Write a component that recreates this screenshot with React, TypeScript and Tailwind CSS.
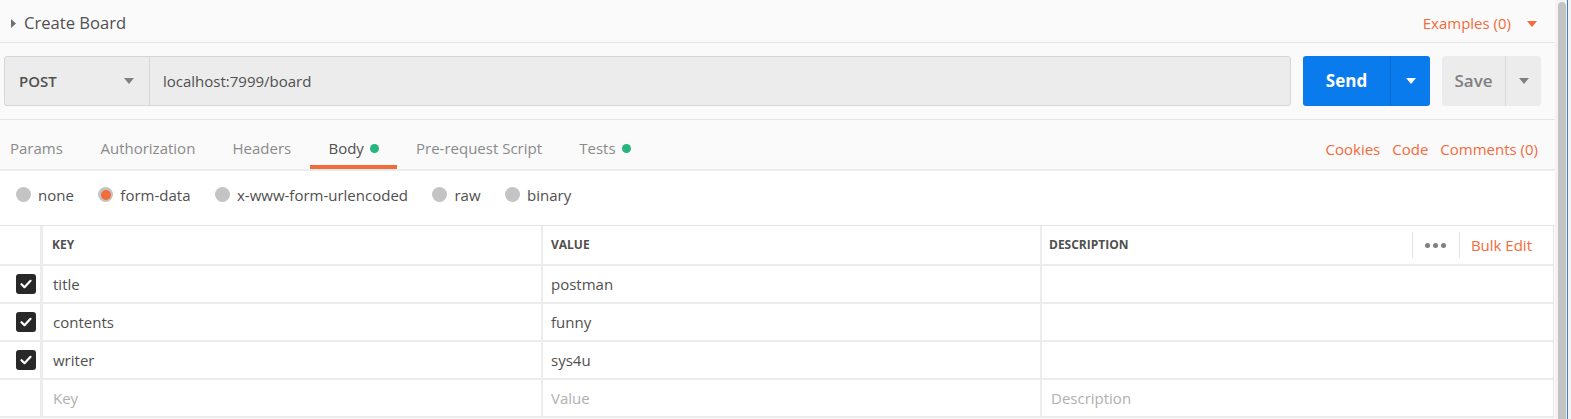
import React from 'react';

const rows = [
  { key: 'title', value: 'postman' },
  { key: 'contents', value: 'funny' },
  { key: 'writer', value: 'sys4u' },
];

const tabs = [
  { label: 'Params' },
  { label: 'Authorization' },
  { label: 'Headers' },
  { label: 'Body', dot: true, active: true },
  { label: 'Pre-request Script' },
  { label: 'Tests', dot: true },
];

const bodyModes = ['none', 'form-data', 'x-www-form-urlencoded', 'raw', 'binary'];

function Caret({ className }: { className: string }) {
  return (
    <svg width="10" height="6" viewBox="0 0 10 6" className={className}>
      <path d="M0 0h10L5 6z" fill="currentColor" />
    </svg>
  );
}

function Checkbox() {
  return (
    <span className="flex h-[20px] w-[20px] items-center justify-center rounded-[3px] bg-[#282828]">
      <svg width="12" height="10" viewBox="0 0 12 10">
        <path d="M1.5 5.2l3 3 6-6.4" fill="none" stroke="#fff" strokeWidth="2.2" strokeLinecap="round" strokeLinejoin="round" />
      </svg>
    </span>
  );
}

export default function App() {
  return (
    <div className="flex h-[419px] w-[1571px] overflow-hidden bg-[#fafafa] font-['Open_Sans',sans-serif] text-[15px] text-[#505050]">
      <div className="flex w-[1555px] flex-col">
        {/* Request name */}
        <div className="flex h-[43px] items-center justify-between border-b border-[#e6e6e6] pt-[5px] pr-[18px] pl-[11px]">
          <div className="flex items-center gap-[8px]">
            <svg width="5" height="9" viewBox="0 0 5 9">
              <path d="M0 0l5 4.5L0 9z" fill="#707070" />
            </svg>
            <span className="text-[16.6px] text-[#505050]">Create Board</span>
          </div>
          <div className="flex items-center gap-[16px] text-[#f26b3a]">
            <span>Examples (0)</span>
            <Caret className="text-[#f26b3a]" />
          </div>
        </div>

        {/* URL bar */}
        <div className="flex h-[77px] items-center gap-[12px] border-b border-[#e6e6e6] pr-[14px] pl-[4px]">
          <div className="flex h-[50px] flex-1 overflow-hidden rounded-[3px] border border-[#d6d6d6] bg-[#ececec]">
            <div className="flex w-[145px] items-center justify-between border-r border-[#d6d6d6] pr-[15px] pl-[14px]">
              <span className="font-semibold text-[#505050]">POST</span>
              <Caret className="text-[#808080]" />
            </div>
            <div className="flex flex-1 items-center pl-[13px] text-[#505050]">localhost:7999/board</div>
          </div>
          <div className="flex h-[50px] w-[127px] overflow-hidden rounded-[3px] bg-[#097bed] text-white">
            <div className="flex w-[88px] items-center justify-center border-r border-[#0a6cd0] text-[17px] font-bold">Send</div>
            <div className="flex flex-1 items-center justify-center">
              <Caret className="text-white" />
            </div>
          </div>
          <div className="flex h-[50px] w-[99px] overflow-hidden rounded-[3px] bg-[#ececec] text-[#808080]">
            <div className="flex w-[64px] items-center justify-center border-r border-[#d9d9d9] text-[17px] font-semibold">Save</div>
            <div className="flex flex-1 items-center justify-center">
              <Caret className="text-[#808080]" />
            </div>
          </div>
        </div>

        {/* Tabs */}
        <div className="flex h-[51px] items-stretch justify-between border-b-2 border-[#ececec] pr-[17px]">
          <div className="flex items-stretch pl-[10px]">
            {tabs.map((t, i) => (
              <div
                key={t.label}
                className={
                  'flex items-center gap-[6px] border-b-[4px] pt-[12px] ' +
                  (i === 0 ? 'pr-[19px] ' : 'px-[18.6px] ') +
                  (t.active ? 'border-[#f26b3a] text-[#505050]' : 'border-transparent text-[#8a8a8a]')
                }
              >
                <span>{t.label}</span>
                {t.dot && <span className="h-[9px] w-[9px] rounded-full bg-[#26b47f]" />}
              </div>
            ))}
          </div>
          <div className="flex items-center gap-[12px] pt-[10px] text-[#f26b3a]">
            <span>Cookies</span>
            <span>Code</span>
            <span>Comments (0)</span>
          </div>
        </div>

        {/* Body modes */}
        <div className="flex h-[54px] items-center gap-[24.5px] bg-white pb-[7px] pl-[16px]">
          {bodyModes.map((m) => (
            <div key={m} className="flex items-center gap-[7px]">
              <span className="flex h-[15px] w-[15px] items-center justify-center rounded-full bg-[#c4c4c4]">
                {m === 'form-data' && <span className="h-[10px] w-[10px] rounded-full bg-[#f26b3a]" />}
              </span>
              <span className="pt-[2px]">{m}</span>
            </div>
          ))}
        </div>

        {/* Key/value table */}
        <div className="w-[1554px] border-t border-r border-[#e6e6e6] bg-white">
          <div className="flex h-[40px] border-b-2 border-[#ececec] text-[12px] font-bold">
            <div className="w-[40px]" />
            <div className="flex w-[501px] items-center border-l-[3px] border-[#ececec] pl-[9px]">KEY</div>
            <div className="flex w-[499px] items-center border-l-2 border-[#ececec] pl-[8px]">VALUE</div>
            <div className="flex flex-1 items-center justify-between border-l-2 border-[#ececec] pl-[7px] pr-[21px]">
              <span>DESCRIPTION</span>
              <div className="flex h-[26px] items-center">
                <span className="h-full border-l border-[#e3e3e3]" />
                <span className="flex w-[46px] items-center justify-center gap-[3px]">
                  <span className="h-[5px] w-[5px] rounded-full bg-[#808080]" />
                  <span className="h-[5px] w-[5px] rounded-full bg-[#808080]" />
                  <span className="h-[5px] w-[5px] rounded-full bg-[#808080]" />
                </span>
                <span className="h-full border-l border-[#e3e3e3]" />
                <span className="pl-[11px] text-[15px] font-normal text-[#f26b3a]">Bulk Edit</span>
              </div>
            </div>
          </div>
          {rows.map((r) => (
            <div key={r.key} className="flex h-[38px] border-b-2 border-[#ececec]">
              <div className="flex w-[40px] items-center pl-[16px]">
                <Checkbox />
              </div>
              <div className="flex w-[501px] items-center border-l-[3px] border-[#ececec] pl-[10px]">{r.key}</div>
              <div className="flex w-[499px] items-center border-l-2 border-[#ececec] pl-[8px]">{r.value}</div>
              <div className="flex-1 border-l-2 border-[#ececec]" />
            </div>
          ))}
          <div className="flex h-[38px] border-b-2 border-[#ececec] text-[#b0b0b0]">
            <div className="w-[40px]" />
            <div className="flex w-[501px] items-center border-l-[3px] border-[#ececec] pl-[10px]">Key</div>
            <div className="flex w-[499px] items-center border-l-2 border-[#ececec] pl-[8px]">Value</div>
            <div className="flex flex-1 items-center border-l-2 border-[#ececec] pl-[9px]">Description</div>
          </div>
        </div>
      </div>

      {/* Window scrollbar */}
      <div className="flex w-[16px] bg-[#f3f3f3]">
        <div className="ml-[3px] mt-[2px] h-[417px] w-[8px] rounded-t-[4px] bg-[#c3c3c3]" />
        <div className="ml-[1px] w-[1px] bg-[#3c7fc9]" />
      </div>
    </div>
  );
}
